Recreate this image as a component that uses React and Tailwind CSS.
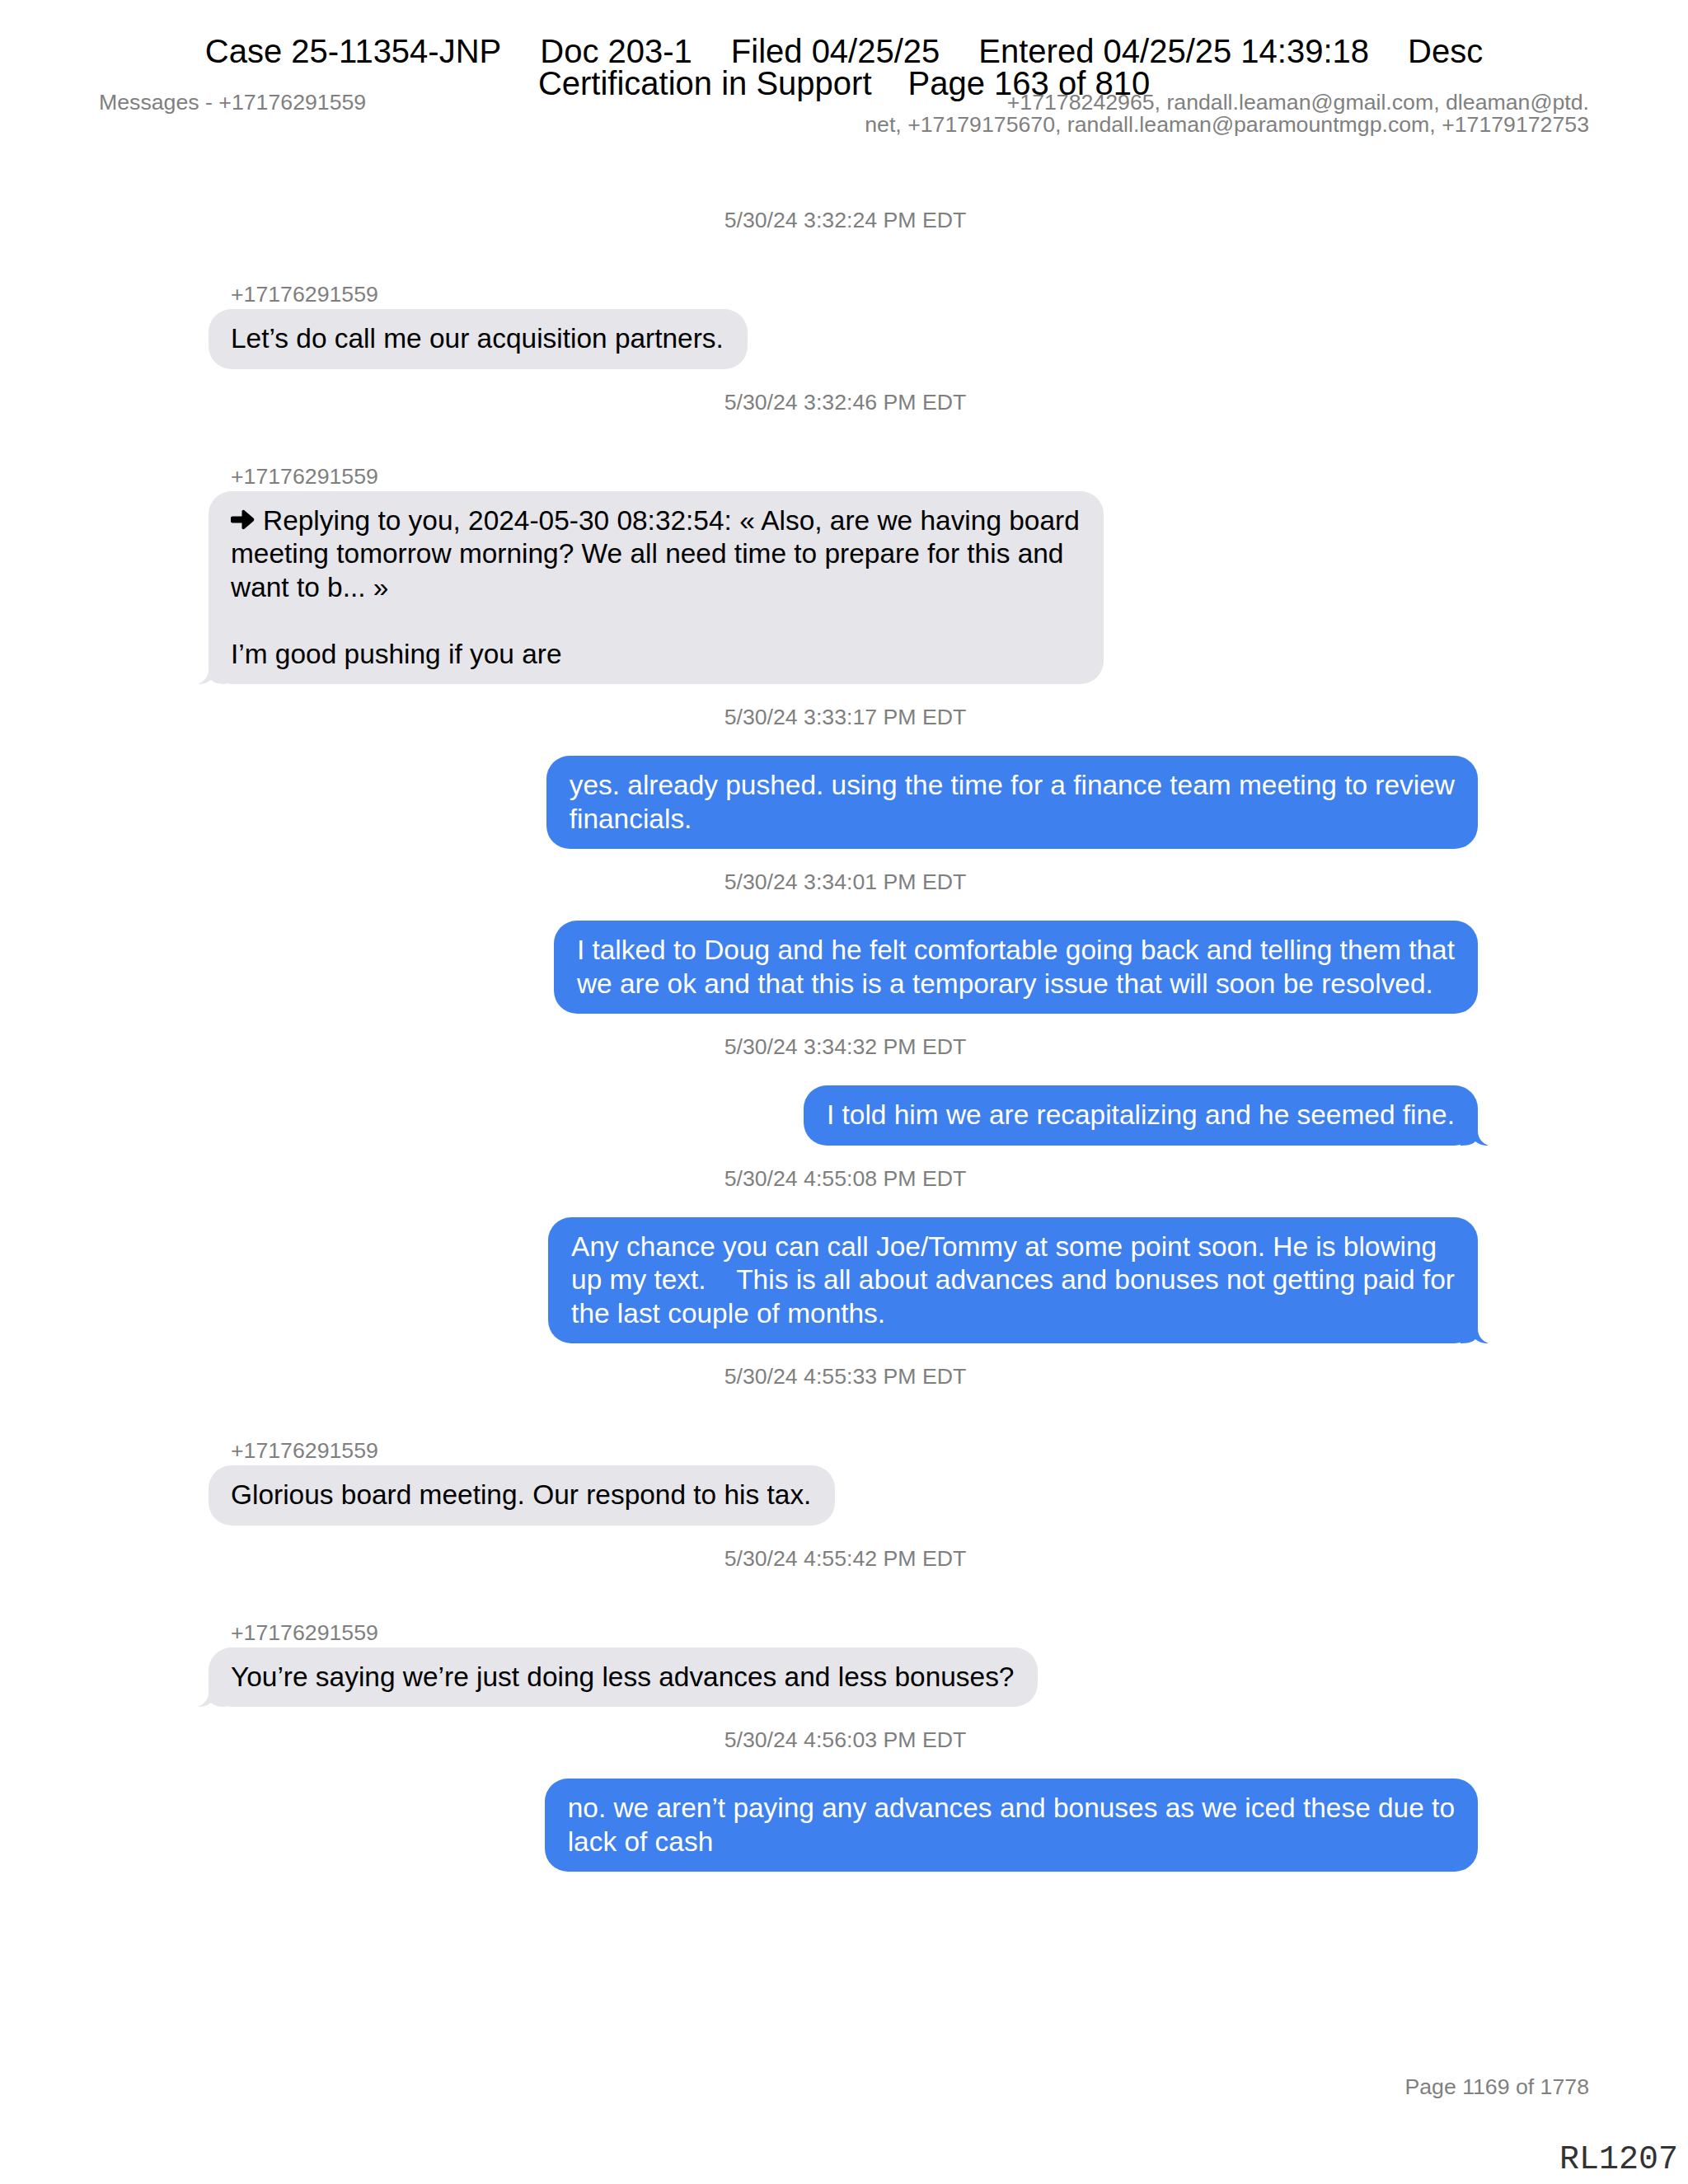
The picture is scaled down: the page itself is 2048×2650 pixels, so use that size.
const incomingTail = (
  <svg className="absolute bottom-0 left-[-13px]" width="34" height="34" viewBox="0 0 34 34">
    <path d="M13,0 L13,16 C13,25 8,31 0,34 C7,34 12,32 16,29 C20,33 25,34 34,34 L34,0 Z" fill="#e5e5ea" />
  </svg>
)

const outgoingTail = (
  <svg className="absolute bottom-0 right-[-13px]" width="34" height="34" viewBox="0 0 34 34">
    <path d="M21,0 L21,16 C21,25 26,31 34,34 C27,34 22,32 18,29 C14,33 9,34 0,34 L0,0 Z" fill="#3d80ee" />
  </svg>
)

const replyArrow = (
  <svg className="inline-block align-baseline mr-[10px]" width="29" height="25" viewBox="0 0 29 25">
    <path
      d="M2,8.5 L13.5,8.5 L13.5,2.5 C13.5,1 15.2,0.2 16.5,1.2 L27.6,10.8 C28.5,11.7 28.5,13.3 27.6,14.2 L16.5,23.8 C15.2,24.8 13.5,24 13.5,22.5 L13.5,16.5 L2,16.5 C0.9,16.5 0,15.6 0,14.5 L0,10.5 C0,9.4 0.9,8.5 2,8.5 Z"
      fill="#000"
    />
  </svg>
)

const messages = [
  { time: '5/30/24 3:32:24 PM EDT' },
  { from: '+17176291559', lines: ['Let’s do call me our acquisition partners.'] },
  { time: '5/30/24 3:32:46 PM EDT' },
  {
    from: '+17176291559',
    tail: true,
    reply: true,
    lines: [
      'Replying to you, 2024-05-30 08:32:54: « Also, are we having board',
      'meeting tomorrow morning? We all need time to prepare for this and',
      'want to b... »',
      '\u00a0',
      'I’m good pushing if you are',
    ],
  },
  { time: '5/30/24 3:33:17 PM EDT' },
  { me: true, lines: ['yes. already pushed. using the time for a finance team meeting to review', 'financials.'] },
  { time: '5/30/24 3:34:01 PM EDT' },
  {
    me: true,
    lines: [
      'I talked to Doug and he felt comfortable going back and telling them that',
      'we are ok and that this is a temporary issue that will soon be resolved.',
    ],
  },
  { time: '5/30/24 3:34:32 PM EDT' },
  { me: true, tail: true, lines: ['I told him we are recapitalizing and he seemed fine.'] },
  { time: '5/30/24 4:55:08 PM EDT' },
  {
    me: true,
    tail: true,
    lines: [
      'Any chance you can call Joe/Tommy at some point soon. He is blowing',
      'up my text.    This is all about advances and bonuses not getting paid for',
      'the last couple of months.',
    ],
  },
  { time: '5/30/24 4:55:33 PM EDT' },
  { from: '+17176291559', lines: ['Glorious board meeting. Our respond to his tax.'] },
  { time: '5/30/24 4:55:42 PM EDT' },
  { from: '+17176291559', tail: true, lines: ['You’re saying we’re just doing less advances and less bonuses?'] },
  { time: '5/30/24 4:56:03 PM EDT' },
  { me: true, lines: ['no. we aren’t paying any advances and bonuses as we iced these due to', 'lack of cash'] },
]

function Bubble({ m }) {
  const base = 'relative py-[16px] rounded-[28px] text-[33.45px] leading-[40.5px] whitespace-pre'
  return (
    <div
      className={
        m.me
          ? base + ' px-[28px] self-end bg-[#3d80ee] text-white'
          : base + ' pl-[27px] pr-[29px] self-start bg-[#e5e5ea] text-black'
      }
    >
      {m.lines.map((line, i) => (
        <div key={i}>
          {m.reply && i === 0 && replyArrow}
          {line}
        </div>
      ))}
      {m.tail && (m.me ? outgoingTail : incomingTail)}
    </div>
  )
}

export default function App() {
  return (
    <div className="relative w-[2048px] min-h-[2650px] bg-white flex flex-col font-['Liberation_Sans',Arial,sans-serif]">
      {/* court filing stamp laid over the export header */}
      <div className="absolute top-[43px] left-0 right-0 text-center text-[40px] leading-[39px] text-black">
        <div className="flex justify-center gap-[47px]">
          <span>Case 25-11354-JNP</span>
          <span>Doc 203-1</span>
          <span>Filed 04/25/25</span>
          <span>Entered 04/25/25 14:39:18</span>
          <span>Desc</span>
        </div>
        <div className="flex justify-center gap-[44px]">
          <span>Certification in Support</span>
          <span>Page 163 of 810</span>
        </div>
      </div>

      <div className="flex justify-between items-start pt-[111px] px-[120px] text-[26.7px] leading-[27px] text-[#808080]">
        <div>Messages - +17176291559</div>
        <div className="text-right">
          <div>+17178242965, randall.leaman@gmail.com, dleaman@ptd.</div>
          <div>net, +17179175670, randall.leaman@paramountmgp.com, +17179172753</div>
        </div>
      </div>

      <div className="flex flex-col pl-[253px] pr-[255px] mt-[86px]">
        {messages.map((m, i) => {
          let mt
          if (m.time) {
            mt = i === 0 ? 'mt-0' : 'mt-[24px]'
          } else if (m.from) {
            mt = 'mt-[58px]'
          } else {
            mt = 'mt-[31px]'
          }
          if (m.time) {
            return (
              <div key={i} className={mt + ' pl-[5px] text-center text-[26.7px] leading-[32px] text-[#7f7f7f]'}>
                {m.time}
              </div>
            )
          }
          if (m.from) {
            return (
              <div key={i} className={mt + ' flex flex-col'}>
                <div className="pl-[27px] text-[26.7px] leading-[32px] text-[#7f7f7f]">{m.from}</div>
                <div className="mt-[2px] flex flex-col">
                  <Bubble m={m} />
                </div>
              </div>
            )
          }
          return (
            <div key={i} className={mt + ' flex flex-col'}>
              <Bubble m={m} />
            </div>
          )
        })}
      </div>

      <div className="mt-auto flex flex-col items-end">
        <div className="pr-[120px] text-[26.7px] leading-[27px] text-[#808080]">Page 1169 of 1778</div>
        <div className="mt-[55px] mb-[9px] pr-[12px] font-['Liberation_Mono',monospace] text-[40px] leading-[40px] text-[#333]">
          RL1207
        </div>
      </div>
    </div>
  )
}
